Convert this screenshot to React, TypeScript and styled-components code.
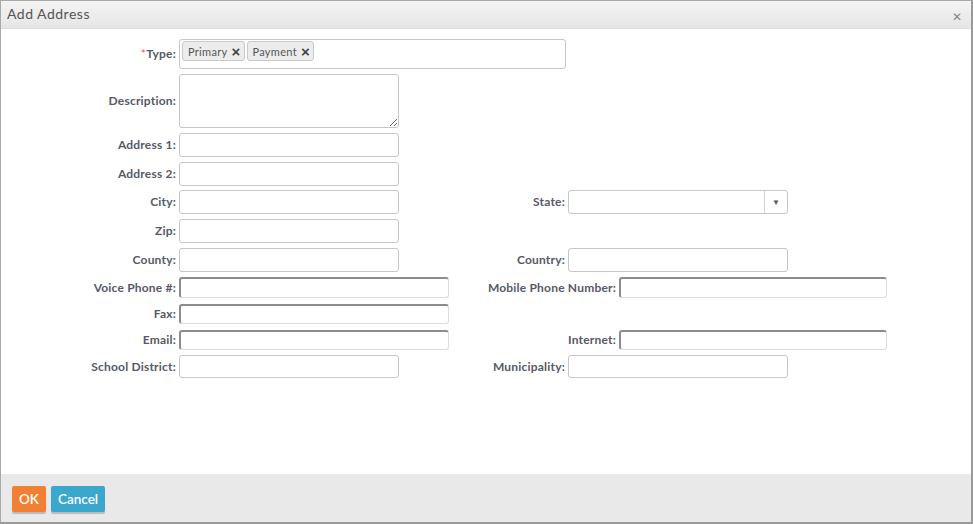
import React from 'react';
import styled, { createGlobalStyle, css } from 'styled-components';

const GlobalStyle = createGlobalStyle`
  html, body {
    margin: 0;
    padding: 0;
    background: #fff;
  }
  body {
    font-family: Lato, "Open Sans", Arial, sans-serif;
  }
`;

const Dialog = styled.div`
  box-sizing: border-box;
  width: 973px;
  height: 524px;
  display: flex;
  flex-direction: column;
  border: 1px solid #a9a9a9;
  border-right: 2px solid #9a9a9a;
  border-bottom: 2px solid #9a9a9a;
  background: #fff;
`;

const TitleBar = styled.div`
  height: 27px;
  flex: none;
  display: flex;
  align-items: center;
  justify-content: space-between;
  padding: 0 9px 0 6px;
  background: linear-gradient(#f4f4f4, #e6e6e6);
  border-bottom: 1px solid #dcdcdc;
`;

const Title = styled.span`
  font-size: 14px;
  color: #555;
  letter-spacing: 0.5px;
  margin-top: -2px;
`;

const CloseButton = styled.span`
  font-family: Arial, sans-serif;
  font-size: 12px;
  color: #888;
  line-height: 1;
  margin-top: 4px;
`;

const Body = styled.div`
  flex: 1;
  padding-top: 10px;
`;

const Row = styled.div<{ $gap?: number }>`
  display: flex;
  align-items: center;
  margin-bottom: ${({ $gap }) => $gap ?? 5}px;
`;

const Label = styled.label<{ $width?: number }>`
  flex: none;
  width: ${({ $width }) => $width ?? 178}px;
  padding-right: 3px;
  box-sizing: border-box;
  text-align: right;
  font-size: 12px;
  font-weight: 700;
  letter-spacing: 0.2px;
  color: #555a66;
  white-space: nowrap;
  margin-top: -1px;
`;

const Required = styled.span`
  color: #e55;
  font-weight: 400;
`;

const fieldBase = css`
  box-sizing: border-box;
  border: 1px solid #c6c6c6;
  border-radius: 3px;
  background: #fff;
  font-family: inherit;
  font-size: 12px;
  outline: none;
  margin: 0;
`;

const Input = styled.input<{ $width?: number; $height?: number; $sunken?: boolean }>`
  ${fieldBase};
  width: ${({ $width }) => $width ?? 220}px;
  height: ${({ $height }) => $height ?? 24}px;
  ${({ $sunken }) =>
    $sunken &&
    css`
      border-top: 2px solid #8c8c8c;
      border-left: 2px solid #8c8c8c;
      border-right-color: #dcdcdc;
      border-bottom-color: #dcdcdc;
    `}
`;

const TextArea = styled.textarea`
  ${fieldBase};
  width: 220px;
  height: 54px;
  resize: both;
`;

const TagBox = styled.div`
  ${fieldBase};
  width: 387px;
  height: 30px;
  padding: 1px 2px;
  display: flex;
  align-items: flex-start;
  gap: 2px;
`;

const Tag = styled.span`
  display: inline-flex;
  align-items: center;
  gap: 4px;
  height: 20px;
  box-sizing: border-box;
  padding: 0 3px 0 5px;
  border: 1px solid #c9c9c9;
  border-radius: 3px;
  background: #ececec;
  font-size: 11px;
  letter-spacing: 0.3px;
  color: #555;
`;

const TagX = styled.span`
  font-family: Arial, sans-serif;
  font-size: 15px;
  font-weight: 700;
  color: #444;
  line-height: 1;
`;

const Select = styled.div`
  ${fieldBase};
  width: 220px;
  height: 24px;
  display: flex;
  justify-content: flex-end;
`;

const SelectArrow = styled.span`
  width: 22px;
  border-left: 1px solid #d2d2d2;
  display: flex;
  align-items: center;
  justify-content: center;
  font-size: 8px;
  color: #555;
`;

const Footer = styled.div`
  height: 48px;
  flex: none;
  background: #e9e9e9;
  display: flex;
  align-items: center;
  gap: 5px;
  padding: 0 11px;
`;

const Button = styled.button<{ $color: string }>`
  height: 26px;
  padding: 0 7px;
  border: none;
  border-radius: 2px;
  background: ${({ $color }) => $color};
  box-shadow: 0 2px 1px rgba(0, 0, 0, 0.2);
  color: #fff;
  font-family: Lato, "Open Sans", Arial, sans-serif;
  font-size: 13.5px;
  font-weight: 600;
  margin-top: 1px;
`;

const App = (): JSX.Element => {
  return (
    <>
      <GlobalStyle />
      <Dialog>
        <TitleBar>
          <Title>Add Address</Title>
          <CloseButton>✕</CloseButton>
        </TitleBar>
        <Body>
          <Row>
            <Label>
              <Required>*</Required>Type:
            </Label>
            <TagBox>
              <Tag>
                Primary <TagX>×</TagX>
              </Tag>
              <Tag>
                Payment <TagX>×</TagX>
              </Tag>
            </TagBox>
          </Row>
          <Row>
            <Label>Description:</Label>
            <TextArea />
          </Row>
          <Row>
            <Label>Address 1:</Label>
            <Input />
          </Row>
          <Row $gap={4}>
            <Label>Address 2:</Label>
            <Input />
          </Row>
          <Row>
            <Label>City:</Label>
            <Input />
            <Label $width={169}>State:</Label>
            <Select>
              <SelectArrow>▼</SelectArrow>
            </Select>
          </Row>
          <Row>
            <Label>Zip:</Label>
            <Input />
          </Row>
          <Row>
            <Label>County:</Label>
            <Input />
            <Label $width={169}>Country:</Label>
            <Input />
          </Row>
          <Row $gap={6}>
            <Label>Voice Phone #:</Label>
            <Input $width={270} $height={21} $sunken />
            <Label $width={170}>Mobile Phone Number:</Label>
            <Input $width={268} $height={21} $sunken />
          </Row>
          <Row $gap={6}>
            <Label>Fax:</Label>
            <Input $width={270} $height={20} $sunken />
          </Row>
          <Row $gap={5}>
            <Label>Email:</Label>
            <Input $width={270} $height={20} $sunken />
            <Label $width={170}>Internet:</Label>
            <Input $width={268} $height={20} $sunken />
          </Row>
          <Row>
            <Label>School District:</Label>
            <Input $height={23} />
            <Label $width={169}>Municipality:</Label>
            <Input $height={23} />
          </Row>
        </Body>
        <Footer>
          <Button $color="#f27f34">OK</Button>
          <Button $color="#3aa7cd">Cancel</Button>
        </Footer>
      </Dialog>
    </>
  );
};

export default App;
